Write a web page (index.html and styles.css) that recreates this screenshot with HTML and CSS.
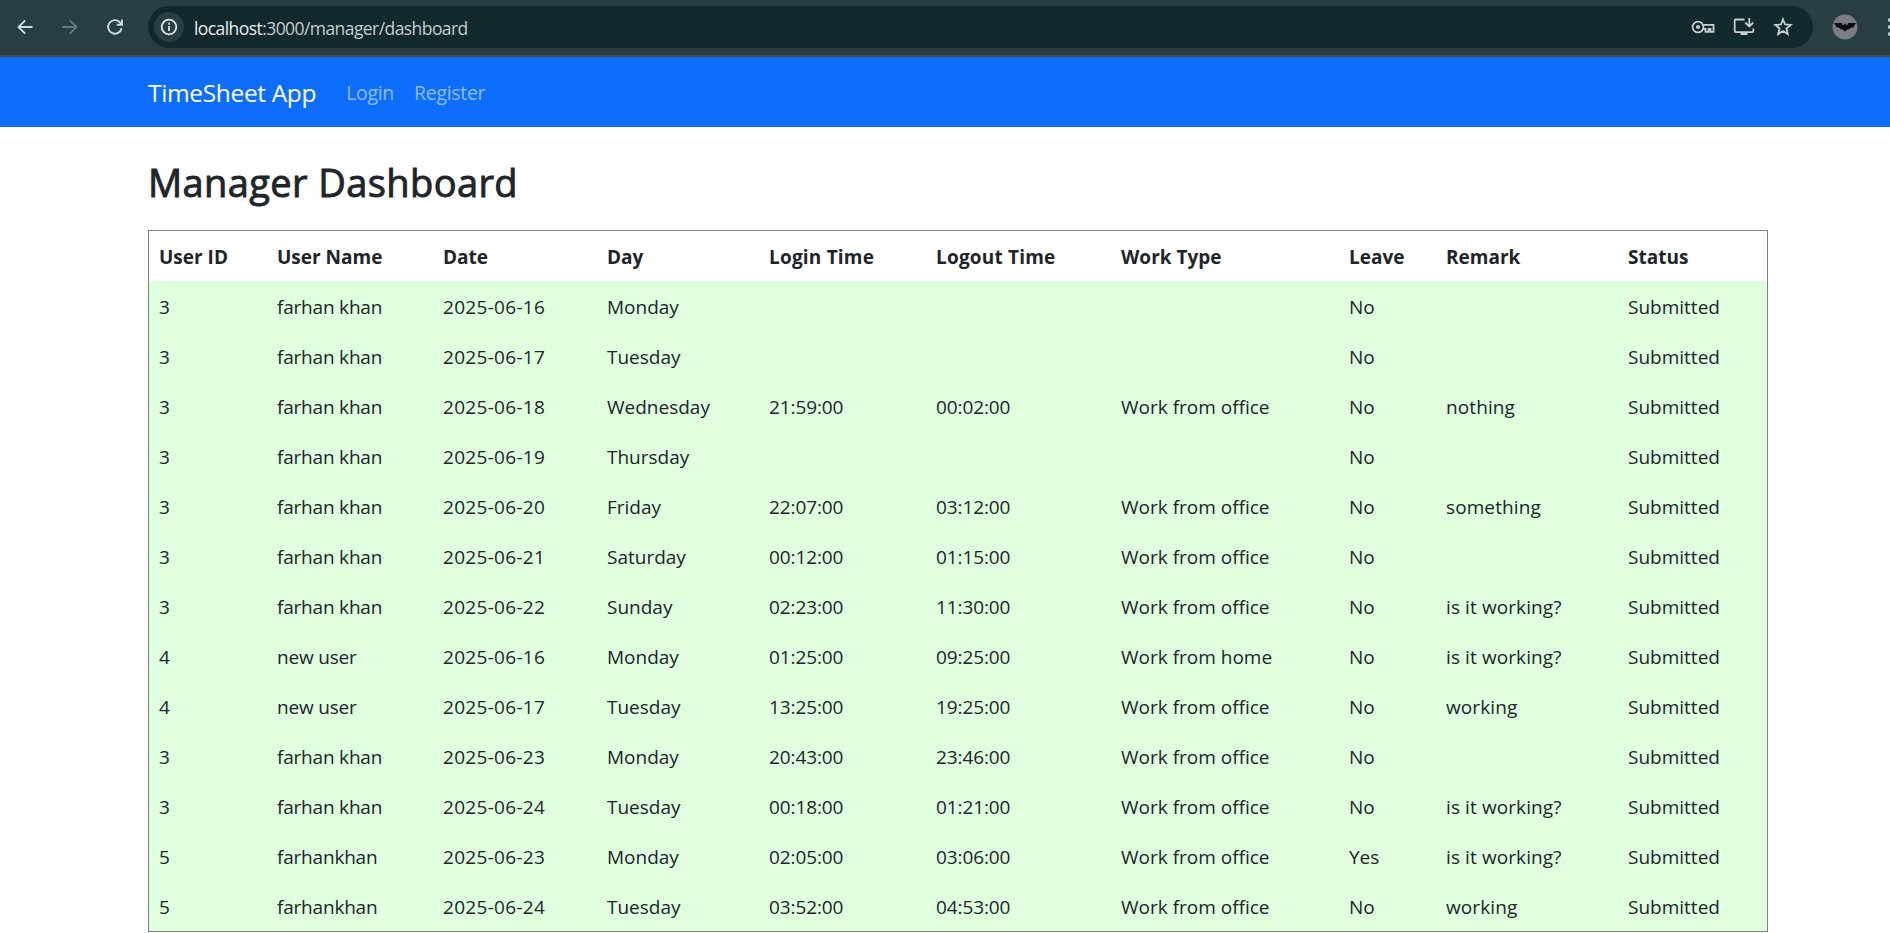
FILE: index.html
```html
<!DOCTYPE html>
<html lang="en">
<head>
<meta charset="utf-8">
<title>TimeSheet App</title>
<link rel="stylesheet" href="styles.css">
</head>
<body>
<header class="browser">
  <div class="controls">
    <svg class="icon" viewBox="0 0 20 20"><path d="M17.500 10H3.500M10.200 3.300 3.500 10l6.700 6.700"/></svg>
    <svg class="icon disabled" viewBox="0 0 20 20"><path d="M2.500 10h14M9.800 3.300l6.700 6.700-6.700 6.700"/></svg>
    <svg class="icon" viewBox="0 0 20 20"><path d="M16.600 11.200a6.800 6.800 0 1 1-1.700-5.900l1.800 1.900M17 2.500v5.200h-5.200"/></svg>
  </div>
  <div class="address">
    <span class="info"><svg viewBox="0 0 20 20"><circle cx="10" cy="10" r="7.300"/><path d="M10 9v5M10 5.800v1.900"/></svg></span>
    <span class="url"><span class="host">localhost</span>:3000/manager/dashboard</span>
    <div class="actions">
      <svg class="key" viewBox="0 0 24 16"><circle cx="7" cy="8" r="5.400"/><circle class="dot" cx="7" cy="8" r="2.100"/><path d="M11.800 5.900H22.500v7h-3V10h-2v2.900h-3V10h-2.700"/></svg>
      <svg class="install" viewBox="0 0 22 20"><path d="M11.500 2.500H2.700a1 1 0 0 0-1 1v10.600a1 1 0 0 0 1 1h16.600a1 1 0 0 0 1-1v-2.600M16.300 1v8.200M12.300 5.500l4 4 4-4"/><path class="stand" d="M7.500 15h7v3h-7z"/></svg>
      <svg class="star" viewBox="0 0 20 20"><path d="M10 2.300l2.100 5.200 5.600.4-4.300 3.600 1.400 5.500-4.800-3-4.800 3 1.400-5.500L2.300 7.900l5.600-.4z"/></svg>
    </div>
  </div>
  <svg class="avatar" viewBox="0 0 26 26"><circle cx="13" cy="13" r="12.500"/><path d="M1.200 9 9.800 9c.3 1.500 1.200 2.200 2.200 2l.3-1.800.7.700.7-.7.300 1.800c1 .2 1.900-.5 2.200-2l8.600 0c-2 1-3 2.600-3.300 4.600-1.700-.5-3.200-.1-4 1.700-1.600-.5-3.300.3-4.500 2.800-1.200-2.500-2.900-3.300-4.500-2.800-.8-1.800-2.300-2.200-4-1.700-.3-2-1.300-3.600-3.300-4.600z"/></svg>
  <span class="menu"><i></i><i></i><i></i></span>
</header>
<nav class="navbar">
  <a class="brand">TimeSheet App</a>
  <a class="link login">Login</a>
  <a class="link register">Register</a>
</nav>
<main class="container">
  <h2 class="title">Manager Dashboard</h2>
  <table class="table">
    <colgroup><col class="c-id"><col class="c-name"><col class="c-date"><col class="c-day"><col class="c-in"><col class="c-out"><col class="c-type"><col class="c-leave"><col class="c-remark"><col class="c-status"></colgroup>
    <thead><tr><th>User ID</th><th>User Name</th><th>Date</th><th>Day</th><th>Login Time</th><th>Logout Time</th><th>Work Type</th><th>Leave</th><th>Remark</th><th>Status</th></tr></thead>
    <tbody>
      <tr><td>3</td><td>farhan khan</td><td>2025-06-16</td><td>Monday</td><td></td><td></td><td></td><td>No</td><td></td><td>Submitted</td></tr>
      <tr><td>3</td><td>farhan khan</td><td>2025-06-17</td><td>Tuesday</td><td></td><td></td><td></td><td>No</td><td></td><td>Submitted</td></tr>
      <tr><td>3</td><td>farhan khan</td><td>2025-06-18</td><td>Wednesday</td><td>21:59:00</td><td>00:02:00</td><td>Work from office</td><td>No</td><td>nothing</td><td>Submitted</td></tr>
      <tr><td>3</td><td>farhan khan</td><td>2025-06-19</td><td>Thursday</td><td></td><td></td><td></td><td>No</td><td></td><td>Submitted</td></tr>
      <tr><td>3</td><td>farhan khan</td><td>2025-06-20</td><td>Friday</td><td>22:07:00</td><td>03:12:00</td><td>Work from office</td><td>No</td><td>something</td><td>Submitted</td></tr>
      <tr><td>3</td><td>farhan khan</td><td>2025-06-21</td><td>Saturday</td><td>00:12:00</td><td>01:15:00</td><td>Work from office</td><td>No</td><td></td><td>Submitted</td></tr>
      <tr><td>3</td><td>farhan khan</td><td>2025-06-22</td><td>Sunday</td><td>02:23:00</td><td>11:30:00</td><td>Work from office</td><td>No</td><td>is it working?</td><td>Submitted</td></tr>
      <tr><td>4</td><td>new user</td><td>2025-06-16</td><td>Monday</td><td>01:25:00</td><td>09:25:00</td><td>Work from home</td><td>No</td><td>is it working?</td><td>Submitted</td></tr>
      <tr><td>4</td><td>new user</td><td>2025-06-17</td><td>Tuesday</td><td>13:25:00</td><td>19:25:00</td><td>Work from office</td><td>No</td><td>working</td><td>Submitted</td></tr>
      <tr><td>3</td><td>farhan khan</td><td>2025-06-23</td><td>Monday</td><td>20:43:00</td><td>23:46:00</td><td>Work from office</td><td>No</td><td></td><td>Submitted</td></tr>
      <tr><td>3</td><td>farhan khan</td><td>2025-06-24</td><td>Tuesday</td><td>00:18:00</td><td>01:21:00</td><td>Work from office</td><td>No</td><td>is it working?</td><td>Submitted</td></tr>
      <tr><td>5</td><td>farhankhan</td><td>2025-06-23</td><td>Monday</td><td>02:05:00</td><td>03:06:00</td><td>Work from office</td><td>Yes</td><td>is it working?</td><td>Submitted</td></tr>
      <tr><td>5</td><td>farhankhan</td><td>2025-06-24</td><td>Tuesday</td><td>03:52:00</td><td>04:53:00</td><td>Work from office</td><td>No</td><td>working</td><td>Submitted</td></tr>
    </tbody>
  </table>
</main>
</body>
</html>
```
FILE: styles.css
```css
* { box-sizing: border-box; }
body { margin: 0; height: 933px; overflow: hidden; background: #fff; color: #212529; font: 19px/30px "Open Sans", sans-serif; }
.browser { display: flex; align-items: center; height: 57px; padding-bottom: 1px; background: #283e42; border-bottom: 2px solid #41494c; overflow: hidden; }
.controls { display: flex; gap: 25px; width: 148px; padding: 0 0 1px 15px; flex: none; }
.icon { width: 20px; height: 20px; fill: none; stroke: #c3dde0; stroke-width: 1.9; }
.disabled { stroke: #67797c; }
.controls .icon { flex: none; }
.address { display: flex; align-items: center; width: 1665px; height: 42px; padding: 0 20px 0 6px; border-radius: 21px; background: #11292c; flex: none; }
.info { display: flex; align-items: center; justify-content: center; width: 30px; height: 30px; border-radius: 50%; background: #283e42; }
.info svg { width: 20px; height: 20px; fill: none; stroke: #dfe8e8; stroke-width: 1.8; }
.url { margin-left: 10px; padding-top: 1px; font-size: 17.5px; letter-spacing: -.57px; color: #c3cccd; }
.host { color: #e8eeee; }
.actions { display: flex; align-items: center; gap: 18px; margin-left: auto; fill: none; stroke: #c5cfcf; stroke-width: 1.8; }
.key { width: 24px; height: 16px; }
.install { width: 22px; height: 20px; }
.star { width: 20px; height: 20px; }
.dot, .stand { fill: #c5cfcf; stroke: none; }
.avatar { width: 26px; height: 26px; margin-left: 19px; flex: none; }
.avatar circle { fill: #7b7c84; }
.avatar path { fill: #0b0b0c; }
.menu { display: flex; flex-direction: column; gap: 3px; margin-left: 30px; flex: none; }
.menu i { width: 4px; height: 4px; border-radius: 50%; background: #c3dde0; }
.navbar { display: flex; align-items: center; height: 70px; padding: 2px 0 0 148px; background: #0d6efd; color: #fff; }
.brand { font-size: 24.5px; letter-spacing: -.35px; margin-right: 30px; }
.link { font-size: 19.5px; letter-spacing: -.3px; color: rgba(255, 255, 255, .55); margin-right: 20px; }
.container { width: 1620px; margin-left: 148px; }
.title { margin: 31px 0 24px; font-size: 38px; line-height: 48px; font-weight: 500; letter-spacing: .4px; -webkit-text-stroke: .9px #212529; }
.table { width: 1620px; table-layout: fixed; border-collapse: separate; border-spacing: 0; border: 1px solid #808080; }
.table th, .table td { height: 50px; padding: 2px 0 0 10px; text-align: left; white-space: nowrap; }
.table th { font-weight: 700; }
.table td { background: #dfffdf; }
.table td:nth-child(2) { letter-spacing: -.2px; }
.table td:nth-child(3) { letter-spacing: .3px; }
.table td:nth-child(5), .table td:nth-child(6) { letter-spacing: -.1px; }
.table th:nth-child(5), .table th:nth-child(6) { letter-spacing: .2px; }
.table td:nth-child(9) { letter-spacing: .1px; }
.c-id { width: 118px; }
.c-name { width: 166px; }
.c-date { width: 164px; }
.c-day { width: 162px; }
.c-in { width: 167px; }
.c-out { width: 185px; }
.c-type { width: 228px; }
.c-leave { width: 97px; }
.c-remark { width: 182px; }
.c-status { width: 149px; }
```
